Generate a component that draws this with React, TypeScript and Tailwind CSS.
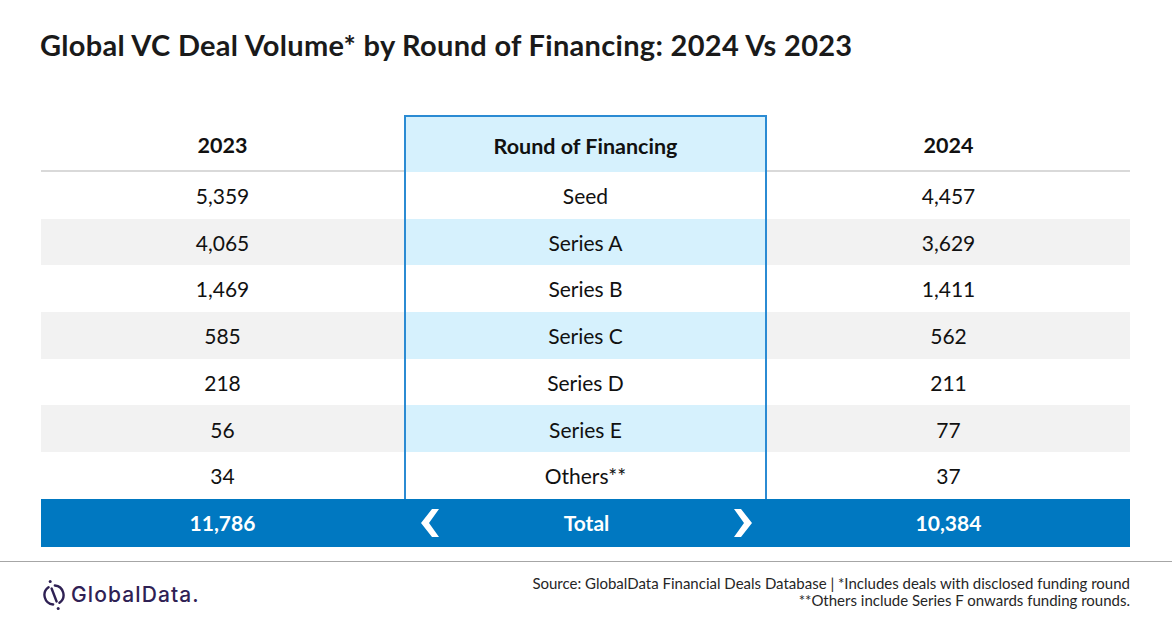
import React from 'react';

type Row = { y2023: string; round: string; y2024: string };

const rows: Row[] = [
  { y2023: '5,359', round: 'Seed', y2024: '4,457' },
  { y2023: '4,065', round: 'Series A', y2024: '3,629' },
  { y2023: '1,469', round: 'Series B', y2024: '1,411' },
  { y2023: '585', round: 'Series C', y2024: '562' },
  { y2023: '218', round: 'Series D', y2024: '211' },
  { y2023: '56', round: 'Series E', y2024: '77' },
  { y2023: '34', round: 'Others**', y2024: '37' },
];

const font = { fontFamily: 'Lato, "Open Sans", sans-serif' };

// heavy chevron like the ❮ glyph in the total bar
const Chevron = ({ flip = false }: { flip?: boolean }) => (
  <svg width="18" height="28" viewBox="0 0 18 28" className={flip ? 'rotate-180' : ''}>
    <polygon points="11,0 18,0 8,14 18,28 11,28 0,14" fill="#ffffff" />
  </svg>
);

const GlobalDataLogo = () => (
  <div className="flex items-center gap-[5px]">
    <svg width="24" height="32" viewBox="0 0 24 32" fill="none">
      <path d="M6.55 8.22 A9.5 9.5 0 0 0 11.17 25.46" stroke="#2f2154" strokeWidth="2.4" strokeLinecap="round" />
      <path d="M12.83 6.54 A9.5 9.5 0 0 1 17.45 23.78" stroke="#2f2154" strokeWidth="2.4" strokeLinecap="round" />
      <line x1="9.6" y1="9.5" x2="14.6" y2="22.5" stroke="#2f2154" strokeWidth="2.4" strokeLinecap="round" />
      <circle cx="8.2" cy="2.6" r="1.5" fill="#2f2154" />
      <circle cx="16.2" cy="29.4" r="1.5" fill="#2f2154" />
    </svg>
    <span
      className="text-[21px] leading-none font-medium tracking-[1.1px] text-[#2f2154]"
      style={{ fontFamily: 'Inter, Lato, sans-serif' }}
    >
      GlobalData.
    </span>
  </div>
);

export default function App() {
  return (
    <div className="w-[1172px] h-[628px] bg-white overflow-hidden text-[#111111]" style={font}>
      <div className="h-[115px] pl-[40px] pt-[30px]">
        <h1 className="text-[29px] leading-none font-bold tracking-[0.3px] text-[#1a1a1a]">
          Global VC Deal Volume* by Round of Financing: 2024 Vs 2023
        </h1>
      </div>

      <div className="ml-[41px] w-[1089px]">
        {/* header */}
        <div className="grid grid-cols-3 h-[57px] text-[21.5px] font-bold">
          <div className="flex items-center justify-center pt-[5px] border-b-2 border-[#d9d9d9]">2023</div>
          <div className="flex items-center justify-center pt-[3px] bg-[#d6f1fd] border-x-2 border-t-2 border-[#2b8bd3]">
            Round of Financing
          </div>
          <div className="flex items-center justify-center pt-[5px] border-b-2 border-[#d9d9d9]">2024</div>
        </div>

        {rows.map((r, i) => {
          const odd = i % 2 === 1;
          return (
            <div key={r.round} className="grid grid-cols-3 h-[46.7px] text-[21px]">
              <div className={`flex items-center justify-center pt-[1px] ${odd ? 'bg-[#f2f2f2]' : 'bg-white'}`}>{r.y2023}</div>
              <div className={`flex items-center justify-center pt-[1px] border-x-2 border-[#2b8bd3] ${odd ? 'bg-[#d6f1fd]' : 'bg-white'}`}>
                {r.round}
              </div>
              <div className={`flex items-center justify-center pt-[1px] ${odd ? 'bg-[#f2f2f2]' : 'bg-white'}`}>{r.y2024}</div>
            </div>
          );
        })}

        {/* total bar */}
        <div className="grid grid-cols-3 h-[48px] bg-[#0078c1] text-white text-[21px] font-bold">
          <div className="flex items-center justify-center">11,786</div>
          <div className="flex items-center justify-between pl-[17px] pr-[15px]">
            <Chevron />
            <span>Total</span>
            <Chevron flip />
          </div>
          <div className="flex items-center justify-center">10,384</div>
        </div>
      </div>

      <div className="mt-[14px] h-px bg-[#a6a6a6]" />

      <div className="flex items-start justify-between pl-[42px] pr-[42px] pt-[13px]">
        <div className="pt-[4px]">
          <GlobalDataLogo />
        </div>
        <div className="text-right text-[15px] leading-[17px] text-[#262626]">
          <p>Source: GlobalData Financial Deals Database | *Includes deals with disclosed funding round</p>
          <p>**Others include Series F onwards funding rounds.</p>
        </div>
      </div>
    </div>
  );
}
